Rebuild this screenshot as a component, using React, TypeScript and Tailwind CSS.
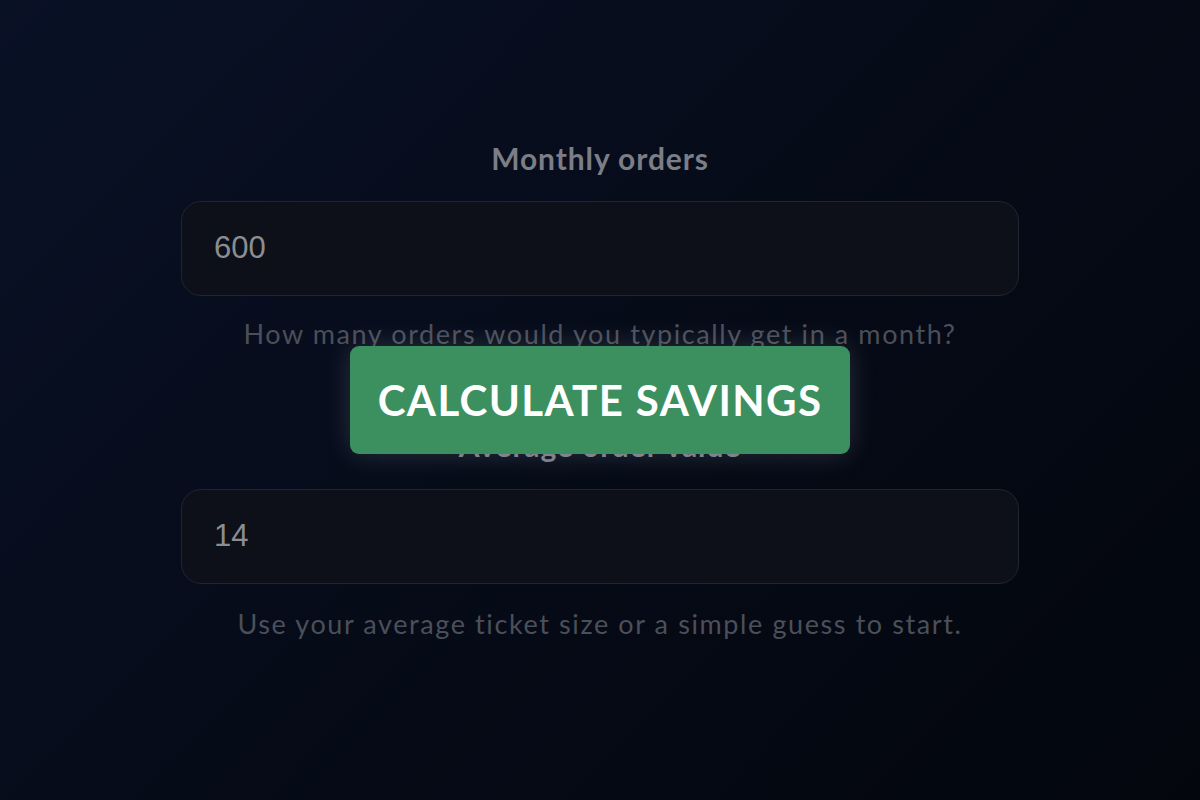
import React from "react";

export default function App() {
  return (
    <div className="relative w-[1200px] h-[800px] overflow-hidden bg-[linear-gradient(135deg,#091126_0%,#060b18_50%,#03060d_100%)]" style={{ fontFamily: "Lato, 'Noto Sans', sans-serif" }}>
      <div className="w-[838px] mx-auto pt-[140px] flex flex-col items-stretch">
        <div className="h-[36px] leading-[36px] text-center text-[30px] font-bold text-[#7b7e86] tracking-[0.9px]">Monthly orders</div>
        <div className="mt-[25px] h-[95px] rounded-[20px] border border-[#22252f] bg-[#0d1019] flex items-center px-[32px]">
          <span className="text-[31px] text-[#8b8d92]" style={{ fontFamily: "'Liberation Sans', Arial, sans-serif" }}>600</span>
        </div>
        <div className="mt-[22px] h-[32px] leading-[32px] text-center text-[27px] text-[#4b4f59] tracking-[1.6px]">How many orders would you typically get in a month?</div>
        <div className="mt-[77px] h-[36px] leading-[36px] text-center text-[30px] font-bold text-[#7b7e86] tracking-[0.9px]">Average order value</div>
        <div className="mt-[26px] h-[95px] rounded-[20px] border border-[#22252f] bg-[#0d1019] flex items-center px-[32px]">
          <span className="text-[31px] text-[#8b8d92]" style={{ fontFamily: "'Liberation Sans', Arial, sans-serif" }}>14</span>
        </div>
        <div className="mt-[24px] h-[32px] leading-[32px] text-center text-[27px] text-[#4b4f59] tracking-[1.6px]">Use your average ticket size or a simple guess to start.</div>
      </div>
      <button className="absolute left-[350px] top-[346px] w-[500px] h-[108px] rounded-[9px] bg-[#3c8f5f] text-white text-[42px] font-bold tracking-[1.4px] flex items-center justify-center shadow-[0_0_28px_rgba(200,210,230,0.18)]" style={{ fontFamily: "Lato, 'Noto Sans', sans-serif" }}>
        CALCULATE SAVINGS
      </button>
    </div>
  );
}
